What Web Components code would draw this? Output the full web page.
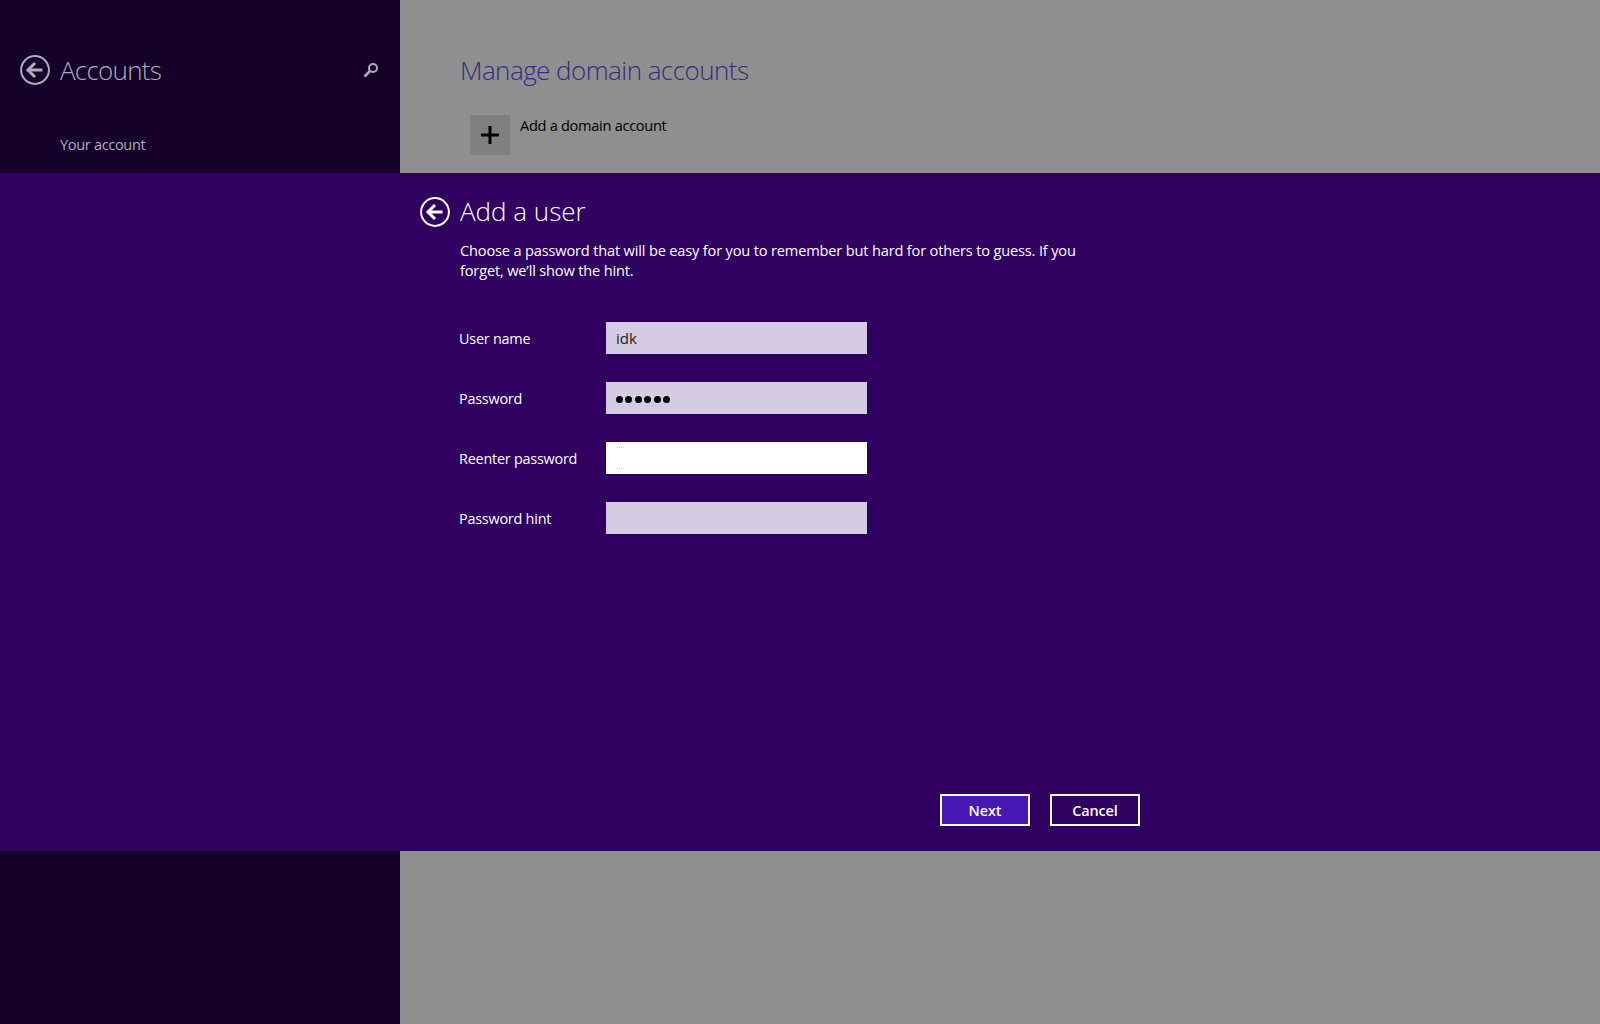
<!DOCTYPE html>
<html lang="en"><head><meta charset="utf-8"><title>Add a user</title>
<style>
html,body{margin:0;padding:0;height:100%;background:#2f0060;font-family:"Open Sans","Noto Sans",sans-serif}
</style></head><body>
<settings-page></settings-page>
<template id="t-back"><style>
:host{display:block;width:30px;height:30px;flex:none}
svg{display:block}
</style><svg width="30" height="30" viewBox="0 0 30 30" fill="none" stroke="currentColor"><circle cx="15" cy="15" r="13.9" stroke-width="2"/><path d="M7.5 15H22.5" stroke-width="3"/><path d="M15 8L8 15L15 22" stroke-width="3"/></svg></template>
<template id="t-row"><style>
:host{display:flex;align-items:center;height:32px;color:#fff;font-size:14.4px;letter-spacing:-.22px}
.l{width:147px;flex:none}
.f{width:261px;height:32px;flex:none;box-sizing:border-box;padding:0 10px;display:flex;align-items:center;background:#d4cce2;color:#222;font-size:15px;letter-spacing:0}
:host([active]) .f{background:#fff}
</style><div class="l"><slot name="label"></slot></div><div class="f"><slot></slot></div></template>
<template id="t-btn"><style>
:host{display:flex;align-items:center;justify-content:center;width:90px;height:32px;box-sizing:border-box;border:2px solid #fff;color:#fff;font-size:14.4px;font-weight:600;letter-spacing:-.1px}
:host([primary]){background:#4617b4}
</style><slot></slot></template>
<template id="t-page"><style>
:host{display:grid;grid-template-rows:173px 678px 173px;width:1600px;height:1024px;overflow:hidden}
.top,.bottom{display:grid;grid-template-columns:400px 1fr}
.side{background:#140028;color:#b3abbc}
.main{background:#8f8f8f}
.side-inner{padding:55px 20px 0}
.head{display:flex;align-items:center;height:30px}
.side h2{margin:0 0 1px 10px;font-size:26px;font-weight:300;line-height:30px;flex:1;letter-spacing:-.75px}
.nav{margin:49px 0 0 40px;font-size:14.6px;line-height:20px;letter-spacing:-.35px}
.main-inner{padding:52px 0 0 60px}
.main h1{margin:0;font-size:26px;font-weight:300;line-height:36px;color:#372a80;letter-spacing:-.55px}
.add{display:flex;margin:27px 0 0 10px;color:#000;font-size:14.6px;letter-spacing:-.3px}
.tile{width:40px;height:40px;background:#7f7f7f;display:flex;align-items:center;justify-content:center;margin-right:10px}
.add span{line-height:20px}
.band{background:#2f0060;color:#fff;padding:24px 0 0 420px;display:flex;flex-direction:column;box-sizing:border-box;height:678px}
.band .head h2{margin:0 0 2px 10px;font-size:26px;font-weight:300;line-height:30px;letter-spacing:0}
.desc{margin:13px 0 0 40px;width:640px;font-size:14.6px;line-height:20px;letter-spacing:-.17px}
.form{margin:42px 0 0 39px;display:flex;flex-direction:column;gap:28px}
.btns{margin:auto 0 25px 520px;display:flex;gap:20px}
.dots{display:flex;gap:2.4px;margin-top:2px}
.dots i{width:7px;height:7px;border-radius:50%;background:#000;display:block}
.caret{display:flex;flex-direction:column;justify-content:space-between;height:23px;width:7px;margin-left:1px}
.caret i{display:block;height:1px;border-top:1px dotted #ccc}
</style>
<div class="top"><div class="side"><div class="side-inner"><div class="head"><back-button></back-button><h2>Accounts</h2>
<svg width="16" height="16" viewBox="0 0 16 16" fill="none" stroke="currentColor" style="margin-right:1px"><circle cx="10" cy="6" r="4" stroke-width="2"/><path d="M7 9L1.5 14.5" stroke-width="2.6"/></svg>
</div><div class="nav">Your account</div></div></div>
<div class="main"><div class="main-inner"><h1>Manage domain accounts</h1><div class="add"><div class="tile"><svg width="20" height="20" viewBox="0 0 20 20" stroke="#000" stroke-width="3"><path d="M10 1V19M1 10H19"/></svg></div><span>Add a domain account</span></div></div></div></div>
<div class="band"><div class="head"><back-button></back-button><h2>Add a user</h2></div>
<div class="desc">Choose a password that will be easy for you to remember but hard for others to guess. If you forget, we’ll show the hint.</div>
<div class="form">
<form-row><span slot="label">User name</span>idk</form-row>
<form-row><span slot="label">Password</span><span class="dots" role="img" aria-label="password"><i></i><i></i><i></i><i></i><i></i><i></i></span></form-row>
<form-row active><span slot="label">Reenter password</span><span class="caret"><i></i><i></i></span></form-row>
<form-row><span slot="label">Password hint</span></form-row>
</div>
<div class="btns"><flat-button primary>Next</flat-button><flat-button>Cancel</flat-button></div></div>
<div class="bottom"><div class="side"></div><div class="main"></div></div>
</template>
<script>
function def(name,id){customElements.define(name,class extends HTMLElement{constructor(){super();this.attachShadow({mode:"open"}).appendChild(document.getElementById(id).content.cloneNode(true));}});}
def("back-button","t-back");def("form-row","t-row");def("flat-button","t-btn");def("settings-page","t-page");
</script>
</body></html>
